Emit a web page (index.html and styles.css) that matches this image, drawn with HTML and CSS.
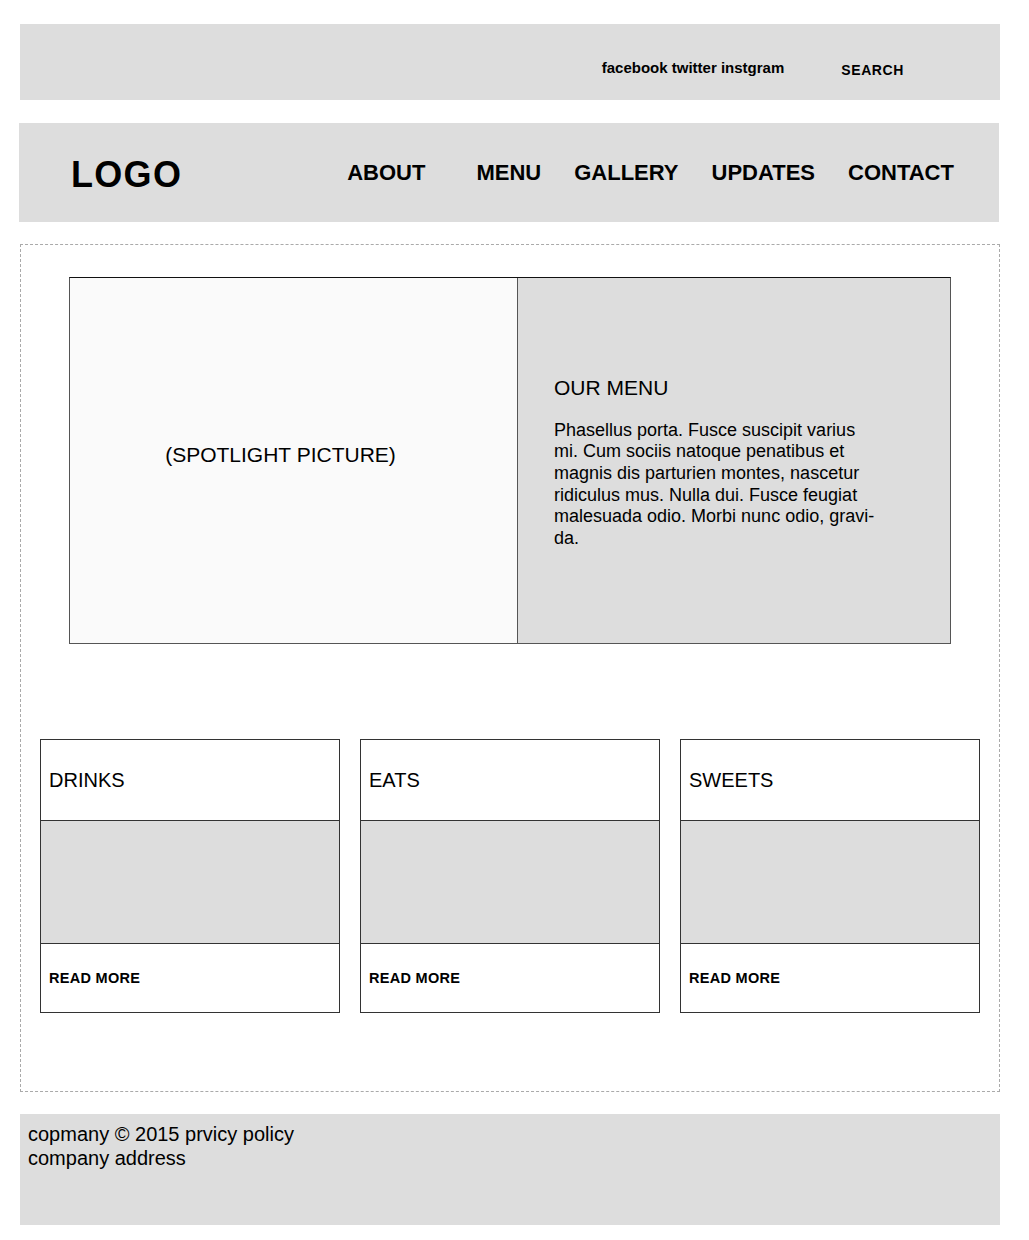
FILE: index.html
```html
<!DOCTYPE html>
<html lang="en">
<head>
    <meta charset="UTF-8">
    <meta name="viewport" content="width=device-width, initial-scale=1.0">
    <title>Cafe Wireframe</title>
    <link rel="stylesheet" href="styles.css">
</head>
<body>
    <div class="top-bar">
        <span class="social">facebook twitter instgram</span>
        <span class="search">SEARCH</span>
    </div>

    <div class="nav-bar">
        <div class="logo">LOGO</div>
        <div class="nav-links">
            <a href="#" class="first">ABOUT</a>
            <a href="#">MENU</a>
            <a href="#">GALLERY</a>
            <a href="#">UPDATES</a>
            <a href="#">CONTACT</a>
        </div>
    </div>

    <div class="main">
        <div class="hero">
            <div class="spotlight">(SPOTLIGHT PICTURE)</div>
            <div class="our-menu">
                <h2>OUR MENU</h2>
                <p>Phasellus porta. Fusce suscipit varius<br>
                mi. Cum sociis natoque penatibus et<br>
                magnis dis parturien montes, nascetur<br>
                ridiculus mus. Nulla dui. Fusce feugiat<br>
                malesuada odio. Morbi nunc odio, gravi-<br>
                da.</p>
            </div>
        </div>

        <div class="cards">
            <div class="card">
                <div class="card-title">DRINKS</div>
                <div class="card-image"></div>
                <div class="card-footer">READ MORE</div>
            </div>
            <div class="card">
                <div class="card-title">EATS</div>
                <div class="card-image"></div>
                <div class="card-footer">READ MORE</div>
            </div>
            <div class="card">
                <div class="card-title">SWEETS</div>
                <div class="card-image"></div>
                <div class="card-footer">READ MORE</div>
            </div>
        </div>
    </div>

    <div class="footer">
        <p>copmany &copy; 2015 prvicy policy</p>
        <p>company address</p>
    </div>
</body>
</html>
```

FILE: styles.css
```css
body {
    font-family: "Liberation Sans", Arial, sans-serif;
    margin: 0;
    padding: 24px 0 0 0;
    background-color: #fff;
    color: #000;
}

.top-bar {
    width: 980px;
    height: 76px;
    margin-left: 20px;
    background-color: #dddddd;
    display: flex;
    justify-content: flex-end;
    align-items: center;
    padding: 16px 96px 0 0;
    box-sizing: border-box;
    font-size: 15px;
    font-weight: bold;
}

.social {
    margin-top: -5px;
}

.search {
    margin-left: 57px;
    font-size: 14px;
    letter-spacing: 0.6px;
}

.nav-bar {
    width: 980px;
    height: 99px;
    margin: 23px 0 0 19px;
    background-color: #dddddd;
    display: flex;
    align-items: center;
    padding-left: 52px;
    box-sizing: border-box;
}

.logo {
    font-size: 36px;
    font-weight: bold;
    letter-spacing: 1.3px;
    margin-top: 4px;
}

.nav-links {
    display: flex;
    gap: 33px;
    margin-left: 165px;
}

.nav-links a {
    color: #000;
    text-decoration: none;
    font-size: 22px;
    font-weight: bold;
}

.nav-links a.first {
    margin-right: 18px;
}

.main {
    width: 980px;
    margin: 22px 0 0 20px;
    border: 1px dashed #aaa;
    box-sizing: border-box;
    padding: 32px 0 78px 19px;
}

.hero {
    display: flex;
    width: 882px;
    height: 367px;
    margin-left: 29px;
    border: 1px solid #555;
    border-top-color: #111;
    box-sizing: border-box;
}

.spotlight {
    width: 448px;
    background-color: #fafafa;
    border-right: 1px solid #555;
    display: flex;
    align-items: center;
    justify-content: center;
    padding: 0 26px 12px 0;
    box-sizing: border-box;
    font-size: 21px;
}

.our-menu {
    flex: 1;
    background-color: #dddddd;
    display: flex;
    flex-direction: column;
    justify-content: center;
    padding: 4px 0 0 36px;
}

.our-menu h2 {
    margin: 0 0 20px 0;
    font-size: 21px;
    font-weight: normal;
}

.our-menu p {
    margin: 0;
    font-size: 18px;
    line-height: 21.6px;
}

.cards {
    display: flex;
    gap: 20px;
    margin-top: 95px;
}

.card {
    width: 300px;
    border: 1px solid #333;
    box-sizing: border-box;
}

.card-title {
    height: 80px;
    border-bottom: 1px solid #333;
    display: flex;
    align-items: center;
    padding-left: 8px;
    font-size: 20px;
}

.card-image {
    height: 122px;
    background-color: #dddddd;
    border-bottom: 1px solid #333;
}

.card-footer {
    height: 68px;
    display: flex;
    align-items: center;
    padding-left: 8px;
    font-size: 14.5px;
    font-weight: bold;
    letter-spacing: 0.3px;
}

.footer {
    width: 980px;
    height: 111px;
    margin: 22px 0 0 20px;
    background-color: #dddddd;
    padding: 8px 8px;
    box-sizing: border-box;
    font-size: 20px;
    line-height: 24px;
}

.footer p {
    margin: 0;
}
```
